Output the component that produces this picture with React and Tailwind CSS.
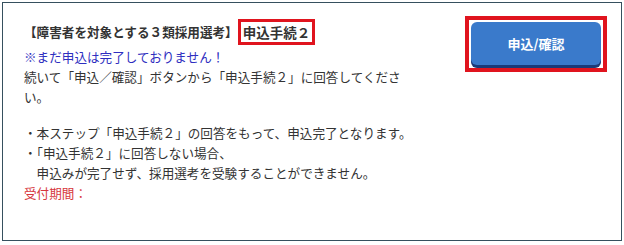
const App = () => {
  return (
    <div className="w-[624px] h-[245px] bg-white p-[2px] font-['Noto_Sans_CJK_JP','Noto_Sans',sans-serif] text-[#333]">
      <div className="h-[239px] border border-[#36505e] flex">
        {/* Left: message */}
        <div className="w-[420px] pl-[21px] pt-[14px] text-[12.6px] leading-[20px]">
          <div className="flex items-center h-[30px]">
            <span className="font-bold text-[12.6px] text-[#333]">【障害者を対象とする３類採用選考】</span>
            <span className="border-[3px] border-[#e0141e] px-[2px] font-bold text-[13.5px] leading-[20px]">
              申込手続２
            </span>
          </div>
          <p className="text-[#2e2ec0]">※まだ申込は完了しておりません！</p>
          <p>続いて「申込／確認」ボタンから「申込手続２」に回答してください。</p>
          <div className="h-[16px]" />
          <p>・本ステップ「申込手続２」の回答をもって、申込完了となります。</p>
          <p>・「申込手続２」に回答しない場合、</p>
          <p>　申込みが完了せず、採用選考を受験することができません。</p>
          <p className="text-[#d6363c]">受付期間：</p>
        </div>

        {/* Right: button */}
        <div className="flex-1 pt-[13px] pl-[42px]">
          <div className="w-[142px] h-[56px] border-[4px] border-[#e0141e] p-[2px]">
            <button className="w-full h-[43px] rounded-[6px] bg-[#3a7acb] shadow-[0_3px_0_#1b3a78] text-white font-bold text-[13px]">
              申込/確認
            </button>
          </div>
        </div>
      </div>
    </div>
  );
};

export default App;
